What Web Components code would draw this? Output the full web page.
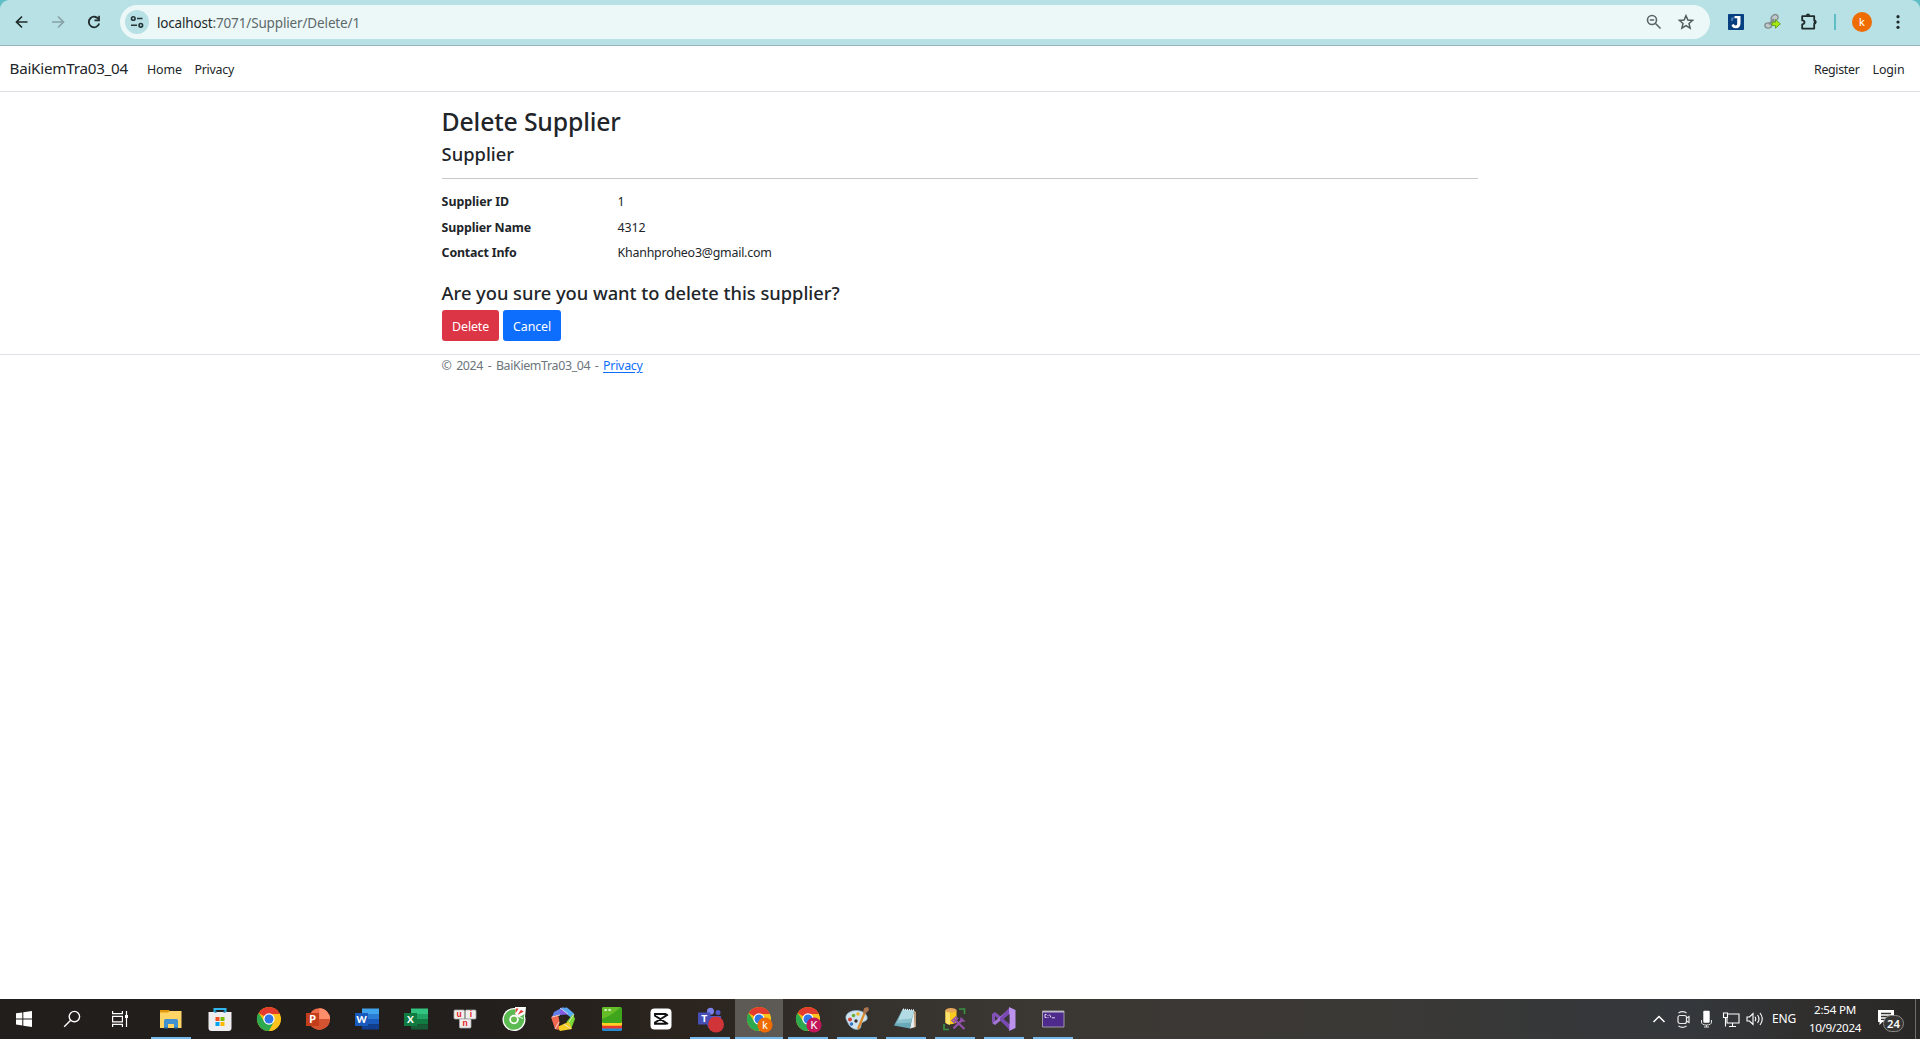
<!DOCTYPE html>
<html lang="en">
<head>
<meta charset="utf-8">
<title>Delete Supplier - BaiKiemTra03_04</title>
<style>
html,body{margin:0;height:100%;overflow:hidden;background:#fff}
body{font-family:"Noto Sans","Open Sans",sans-serif;color:#212529;font-size:12.4px}
</style>
</head>
<body>
<app-window></app-window>
<script>
const define=(name,html,setup)=>customElements.define(name,class extends HTMLElement{
  constructor(){super();this.attachShadow({mode:'open'});}
  connectedCallback(){
    this.shadowRoot.innerHTML=typeof html==='function'?html(this):html;
    if(setup)setup(this);
  }
});
// Text run that spreads its letters over a given advance width.
define('fit-text','<style>:host{display:inline-block;white-space:pre;overflow:visible}:host([underline]) span{text-decoration:underline;text-underline-offset:2px}span{display:inline-block;white-space:pre}</style><span><slot></slot></span>',el=>{
  const w=parseFloat(el.getAttribute('w')),s=el.shadowRoot.querySelector('span');
  const fit=()=>{const n=el.textContent.length;s.style.letterSpacing='0px';
    const nat=s.getBoundingClientRect().width;
    s.style.letterSpacing=((w-nat)/n)+'px';el.style.width=w+'px';};
  requestAnimationFrame(fit);
});

const chrome=(badge,letter)=>`<circle cx="12" cy="12" r="12" fill="#fbbc05"/><path d="M12 12 1.6 6A12 12 0 0 1 22.4 6L23 7H12z" fill="#e33b2e"/><path d="M1.6 6A12 12 0 0 0 12 24l5-9-5-3-5 2z" fill="#2da94f"/><path d="M12 24a12 12 0 0 0 10.6-17H12l5 8z" fill="#fcc31e"/><circle cx="12" cy="12" r="5.7" fill="#fff"/><circle cx="12" cy="12" r="4.5" fill="#2f76e8"/>${badge?`<circle cx="18" cy="18" r="7.6" fill="${badge}"/><text x="18" y="22" font-family="Roboto" font-size="11" fill="#fff" text-anchor="middle">${letter}</text>`:''}`;
const office=(l,a,b,c,d,t)=>`<path d="M7 1.5h17v5.5H7z" fill="${a}"/><path d="M7 7h17v5H7z" fill="${b}"/><path d="M7 12h17v5.500H7z" fill="${c}"/><path d="M7 17.500h17v5H7z" fill="${d}"/><path d="M0 6h13v13H0z" fill="${t}"/><text x="6.500" y="16.200" text-anchor="middle" font-family="Lato" font-weight="900" font-size="10" fill="#fff">${l}</text>`;
const ICONS={
 back:'<path d="M17.500 12H7M12 6.500 6.500 12 12 17.500" fill="none" stroke="#1f2a2b" stroke-width="1.700"/>',
 forward:'<path d="M6 12h10.500M12 6.500 17.500 12 12 17.500" fill="none" stroke="#86a2a6" stroke-width="1.700"/>',
 reload:'<path d="M16.700 9.300A5.300 5.300 0 1 0 17.200 13.600" fill="none" stroke="#1f2a2b" stroke-width="1.800"/><path d="M17.900 5.800v5.400h-5.400v-1.600h3.800V5.800z" fill="#1f2a2b"/>',
 site:'<g fill="none" stroke="#263638" stroke-width="1.600"><circle cx="8.300" cy="8.500" r="1.800"/><path d="M12 8.500h5.500M6 15.300h6"/><circle cx="15.800" cy="15.300" r="1.800"/></g>',
 zoom:'<g fill="none" stroke="#596567" stroke-width="1.600"><circle cx="10" cy="10" r="4.500"/><path d="m13.300 13.300 5.200 5.200M7.800 10h4.400"/></g>',
 star:'<path d="m12 5.700 1.900 4.300 4.700.400-3.600 3.100 1.100 4.600-4.100-2.500-4.100 2.500L9 13.500l-3.600-3.100 4.700-.4z" fill="none" stroke="#4f5c5e" stroke-width="1.500"/>',
 jext:'<rect x="4" y="4" width="16" height="16" rx=".8" fill="#064081"/><path d="M10.500 6h6v7.200q0 5-4.700 5-3.500 0-4.300-3.200l2.500-1q.3 1.500 1.700 1.500 1.500 0 1.500-2V8.300h-2.700z" fill="#fff"/><path d="M7.500 8.200h2M7 10h2" stroke="#8fb5d8"/>',
 chain:'<g fill="#c3cacb" stroke="#858f91" stroke-width="1.400"><ellipse cx="14.500" cy="8" rx="3.800" ry="2.900" transform="rotate(-40 14.500 8)"/><ellipse cx="8.200" cy="15.500" rx="3.300" ry="2.600"/></g><path d="m9 14.500 5-5.500" stroke="#858f91" stroke-width="2.200"/><path d="M12 12.200h3.500V9.500l4.800 4.400-4.800 4.300v-2.600H12z" fill="#a8e810" stroke="#5c9d15" stroke-width=".9"/>',
 puzzle:'<path d="M6.200 6.200h12v4.200h.6v3h-.6v5.200h-12v-4.300q2.300-.3 2.300-2T6.200 10.400z" fill="none" stroke="#1f2a2b" stroke-width="1.800" stroke-linejoin="round"/><path d="M9.900 5.800q0-2.300 2.100-2.300t2.100 2.300zM18.700 10q2 0 2 2.100t-2 2.100z" fill="#1f2a2b"/>',
 dots:'<g fill="#1f2a2b"><circle cx="12" cy="6.700" r="1.600"/><circle cx="12" cy="12" r="1.600"/><circle cx="12" cy="17.300" r="1.600"/></g>',
 win:'<path fill="#fff" d="m4 6.300 6.300-.9v6H4zM11.300 5.200 20 4v7.400h-8.700zM4 12.400h6.300v6.100L4 17.600zM11.300 12.400H20V20l-8.700-1.300z"/>',
 search:'<g fill="none" stroke="#fff" stroke-width="1.400"><circle cx="14.400" cy="9.600" r="5.200"/><path d="M10.700 13.300 4.200 19.800"/></g>',
 task:'<g fill="none" stroke="#fff" stroke-width="1.200"><path d="M4.600 4v2.700h9.800V4M4.600 20v-2.700h9.800V20M4.600 9.300h9.800v5.500H4.600zM18.500 4v16"/></g><path d="M17 8h3v3h-3z" fill="#fff"/>',
 folder:'<path d="M1 3h9l1.500 2H22v4H1z" fill="#e29a0c"/><path d="M1 5.500h8L11 4h11.500v17H1z" fill="#ffd665"/><path d="M5 13.500q0-1.500 1.500-1.500h11q1.500 0 1.500 1.500V21h-4v-4H9v4H5z" fill="#3f91d0"/><path d="M5 20h4v1.500H5zm10 0h4v1.500h-4z" fill="#2578b7"/>',
 store:'<path d="M6.500 6V2h11v4" fill="none" stroke="#31b7ed" stroke-width="2"/><path d="M.500 5h23v16q0 3-3 3h-17q-3 0-3-3z" fill="#eeeef0"/><path d="M6.500 4.700h2M15.500 4.700h2" stroke="#1380b5" stroke-width="2"/><path d="M7.500 10h4v4h-4z" fill="#f25022"/><path d="M12.500 10h4v4h-4z" fill="#7fba00"/><path d="M7.500 15h4v4h-4z" fill="#00a4ef"/><path d="M12.500 15h4v4h-4z" fill="#ffb900"/>',
 chrome:chrome(),
 ppt:'<circle cx="13.300" cy="12" r="10.700" fill="#ed6c47"/><path d="M13.300 1.300A10.700 10.700 0 0 1 24 12H13.300z" fill="#ff8f6b"/><path d="M2.600 12H24a10.700 10.700 0 0 1-21.400 0" fill="#d35230"/><path d="M0 6h13v13H0z" fill="#c43e1c"/><text x="6.500" y="16.200" text-anchor="middle" font-family="Lato" font-weight="900" font-size="10.500" fill="#fff">P</text>',
 word:office('W','#41a5ee','#2b7cd3','#185abd','#103f91','#185abd'),
 excel:office('X','#33c481','#21a366','#107c41','#185c37','#107c41'),
 uni:'<g fill="#f1efee" stroke="#aaa" stroke-width=".8"><rect x="1" y="3" width="10.500" height="9" rx="1"/><rect x="12.500" y="3" width="10.500" height="9" rx="1"/><rect x="6.500" y="12" width="11.500" height="9" rx="1"/></g><g font-family="Liberation Sans" font-size="8.500" font-weight="700" fill="#e82121" text-anchor="middle"><text x="6" y="9.500">u</text><text x="18" y="9.500">i</text><text x="12" y="18.500">n</text></g>',
 coccoc:'<circle cx="12" cy="12.500" r="11.500" fill="#fff"/><path d="M13 0h11l-1 10H13z" fill="#f9fff2"/><circle cx="12" cy="12.500" r="7.300" fill="none" stroke="#5bbb51" stroke-width="6"/><path d="M13 7 14 1h9l-2 11-5-2z" fill="#fff"/><circle cx="12" cy="12.500" r="4.700" fill="#fff"/><circle cx="12" cy="12.500" r="3" fill="#64bd4d"/><path d="m13.500 6.500.4-5h2.600z" fill="#e33a2f"/><path d="m15.500 8 3.500-5.300 2.700 1.700z" fill="#e33a2f"/><path d="m17.500 10 5-3-1 4z" fill="#5bbb51"/>',
 penta:'<path d="M12 0 3 5 1 10l8-2 7-1z" fill="#607de8"/><path d="m10 1 6-.5 7 6-2 5-5-4z" fill="#58a8f4"/><path d="m10 1 7 6.500H9z" fill="#8557df"/><path d="m22 7 2 5-3.500 9-3-.500-2-5.500z" fill="#7bd735"/><path d="m18 15 3 7-12 2-3-4 9-4z" fill="#f3cd25"/><path d="m0 10 7-2 1.500 6-1 9-3.500-1z" fill="#f06850"/><path d="m12 8.500 4 3-1.500 4.500h-5L8 11.500z" fill="#29221f"/><path d="m9 1 8 6M23 7l-5 8M20 22l-7-5M4 22l4-7M1 10l8-2" stroke="#eee" stroke-width=".8"/>',
 blocks:'<rect x="2" y="14" width="20" height="10" rx="1.500" fill="#238bd1"/><rect x="2" y="12" width="20" height="9.500" rx="1.500" fill="#e9382d"/><rect x="2" y="10" width="20" height="8.800" rx="1.500" fill="#ffcf24"/><rect x="2" y="0" width="20" height="16" rx="1.500" fill="#3fa51d"/><path d="M2 1.500Q2 0 3.500 0h17Q13 8 2 12z" fill="#65bd28"/><path d="M4.500 3h2.300M8.500 3h2.300" stroke="#dcf7c5" stroke-width="2"/>',
 capcut:'<rect x="1.500" y="1.500" width="21" height="21" rx="4" fill="#fff"/><path d="M19 7.500 6 15.500v1.300h10.500V15M19 17 6 8.700V7h10.500v2" fill="none" stroke="#111" stroke-width="1.900"/>',
 teams:'<circle cx="12.500" cy="4.300" r="3.500" fill="#7b83eb"/><circle cx="20" cy="5.500" r="2.500" fill="#5059c9"/><path d="M8 9h15v7q0 7-7 7-6 0-7-6z" fill="#5059c9"/><path d="M0 5.500h12.500v12H0z" fill="#464eb8"/><text x="6.200" y="15" text-anchor="middle" font-family="Lato" font-weight="900" font-size="10" fill="#fff">T</text><circle cx="18" cy="17.500" r="8" fill="#d13438"/>',
 chromek:chrome('#ef6c00','k'), chromeK:chrome('#c2185b','K'),
 paint:'<path d="M2 14C-2 8 5 3 12 3.500q8 .500 10 6 1 4-3 5-3 1-3 4 0 4-4.500 4Q5 22 2 14z" fill="#cfe4f0" stroke="#8bb0c5" stroke-width=".7"/><circle cx="5" cy="12.500" r="2" fill="#d84436"/><circle cx="8.500" cy="8.500" r="1.800" fill="#6dae3a"/><circle cx="13" cy="7" r="1.800" fill="#ecb72d"/><circle cx="6.500" cy="17" r="1.800" fill="#3275c4"/><circle cx="11" cy="14" r="1.700" fill="#35302d"/><path d="M20 5 13 22" stroke="#df8c2e" stroke-width="2.300"/><path d="m18 6 1-5 4-1 1 3-4 4z" fill="#a87550"/>',
 note:'<path d="m19.500 3 2.500 2v15l-5.500 1.500z" fill="#b99a78"/><path d="m19.500 3 1 17-4.500 1.500z" fill="#e8eef0"/><path d="M8.500 2.500 20 3.500l-4 18L0 18.500z" fill="#69a9b8"/><path d="M8.500 2.500 20 3.500l-2 8-14 2z" fill="#b3dbe3"/><path d="m4 13 14-1.500-1 4-15 1z" fill="#8cc3cf"/><path d="M9 2.200 20 3.200" stroke="#eef7fa" stroke-width="1.500" stroke-dasharray="1 1"/>',
 ssms:'<path d="M2.500 3.500v12q5 3.500 11 0v-12z" fill="#fcca1d"/><path d="M2.500 4v12q2 1.500 4.500 2V5z" fill="#ffe36a"/><ellipse cx="8" cy="3.300" rx="5.500" ry="2.300" fill="#e7a957"/><path d="M16 2h5.500v5M1 17v5.500h5" fill="none" stroke="#38913f" stroke-width="1.700"/><path d="m11 12 10.500 10M20 12 10.500 21.500" stroke="#9351ac" stroke-width="2.300"/><path d="M9 13.500 13 10l1.500 1.500-3.500 4zM18 10.500v3.500h4" fill="none" stroke="#9351ac" stroke-width="1.500"/>',
 vs:'<path d="m0 7 3-2 15 12v5L3 9v7l-3-1z" fill="#8052b6"/><path d="m0 16 3 2L18 6V1L3 14z" fill="#a174d5"/><path d="m17 0 6.500 3v18L17 24z" fill="#bd91ee"/><path d="m17 1 .5 22L8 13v-2z" fill="#7a49b3"/><path d="M17.500 7v10l-6-5z" fill="#393633"/>',
 cmd:'<path d="M1.500 4h21.500v16H1.500z" fill="#4d2a8b" stroke="#9d98a6" stroke-width="1"/><path d="M1.500 4h21.500v1.500H1.500z" fill="#c0bdc6"/><path d="M5.500 7.500H4v3h1.500M7 8v.800M7 10v.800m1.500-3.300 1.500 3m1 .300h3" fill="none" stroke="#eee" stroke-width=".9"/>',
 chev:'<path d="m6.500 15 5.500-5.500 5.500 5.500" fill="none" stroke="#fff" stroke-width="1.500"/>',
 meet:'<g fill="none" stroke="#e9e9e9" stroke-width="1.200"><rect x="7" y="8.500" width="8.500" height="8" rx="2"/><path d="m15.500 11 2.500-1.500v6L15.500 14M7.500 6q4-2.700 8 0M7.500 19q4 2.700 8 0"/></g>',
 mic:'<rect x="8.300" y="3.700" width="6.400" height="12" rx="1" fill="#fff"/><path d="M6.500 13v2q0 3 5 3t5-3v-2M11.500 18v2m-2.500 0h5" fill="none" stroke="#ddd" stroke-width="1"/>',
 net:'<path d="M9 7h11v9H8V10M13.500 16v3M10 19.500h7M4.500 6h4v4.500h-4zM6.500 10.500v9" fill="none" stroke="#fff" stroke-width="1.100"/>',
 sound:'<g fill="none" stroke="#fff" stroke-width="1.100"><path d="M4 10h2.500L10 6.500v11L6.500 14H4z"/><path d="M12 9.800q1.500 2.200 0 4.400M14.500 8q3 4 0 8M17 6q4.500 6 0 12"/></g>',
 notif:'<path d="M0 3h16v12H4.500L1.500 18v-3H0z" fill="#fff"/><path d="M3 6.500h10M3 9.500h10M3 12.300h6" stroke="#36342f" stroke-width="1.300"/>'
};
define('ui-icon',el=>{const s=el.getAttribute('size')||24;return `<style>:host{display:block;flex:none}svg{display:block;overflow:visible}</style><svg width="${s}" height="${s}" viewBox="0 0 24 24">${ICONS[el.getAttribute('name')]}</svg>`});

define('browser-bar',`<style>
:host{display:block;background:#5fbec5}
.bar{height:45px;box-sizing:content-box;border-bottom:1px solid #93b5b9;background:#b8e1e5;border-radius:9px 9px 0 0;display:flex;align-items:center;padding:0 10px 0 10px}
.bar>*{margin-top:-1px}
.nav{display:flex;gap:12px;width:110px;flex:none}
.omni{width:1590px;height:34px;border-radius:17px;background:#ecf8f8;display:flex;align-items:center;flex:none}
.chip{width:24px;height:24px;border-radius:50%;background:#b8e1e5;margin-left:5px}
.url{margin-left:8px;font-size:13.500px;color:#5d686a;flex:1;line-height:20px;display:flex;padding-top:1px}
.url b{font-weight:400;color:#1f2a2b}
.act{display:flex;gap:8px;margin-right:12px}
.ext{display:flex;gap:12px;margin-left:14px;align-items:center}
.sep{width:2px;height:16px;background:#5fbec5;margin-left:14px;flex:none}
.av{width:20px;height:20px;border-radius:50%;background:#ef6c00;color:#fff;font:11.500px/20px Roboto,sans-serif;text-align:center;margin-left:16px;flex:none}
.dots{margin-left:14px}
</style><div class="bar"><div class="nav"><ui-icon name="back"></ui-icon><ui-icon name="forward"></ui-icon><ui-icon name="reload"></ui-icon></div>
<div class="omni"><div class="chip"><ui-icon name="site"></ui-icon></div><div class="url"><b><fit-text w="55.500">localhost</fit-text></b><fit-text w="147.500">:7071/Supplier/Delete/1</fit-text></div><div class="act"><ui-icon name="zoom"></ui-icon><ui-icon name="star"></ui-icon></div></div>
<div class="ext"><ui-icon name="jext"></ui-icon><ui-icon name="chain"></ui-icon><ui-icon name="puzzle"></ui-icon></div><div class="sep"></div><div class="av">k</div><ui-icon class="dots" name="dots"></ui-icon></div>`);

define('site-nav',`<style>
:host{display:flex;height:45px;border-bottom:1px solid #dee2e6;align-items:center;padding:0 15.500px 0 9.500px;line-height:20px}
.brand{font-size:15.200px;width:137.500px;margin-top:-2px}
.l{display:flex;gap:12.500px;flex:1;padding-top:2px}.r{display:flex;gap:13px;padding-top:2px}
</style><div class="brand"><fit-text w="118.500">BaiKiemTra03_04</fit-text></div><div class="l"><fit-text w="35">Home</fit-text><fit-text w="39.500">Privacy</fit-text></div><div class="r"><fit-text w="45.500">Register</fit-text><fit-text w="32">Login</fit-text></div>`);

define('detail-row',`<style>:host{display:grid;grid-template-columns:176px 1fr;height:25.600px;line-height:19px}
.t{font-weight:700}</style><div class="t"><slot name="term"></slot></div><div><slot></slot></div>`);
define('action-button',`<style>:host{display:flex;height:31px;border-radius:3px;color:#fff;align-items:center;justify-content:center;background:var(--bg);line-height:19px;padding:2px 0 0 1px;box-sizing:border-box}</style><slot></slot>`);

define('supplier-page',`<style>
:host{display:block;flex:1}
main{width:1036.800px;margin:0 auto;padding-top:14px;height:248px}
h1,h4,h3{margin:0;font-weight:500;white-space:nowrap}
h1{font-size:24.800px;line-height:31px;height:36px}
h4,h3{font-size:18.300px;line-height:24px}
hr{margin:12px 0 13px;border:0;height:1px;background:#c8c9ca}
h3{margin-top:12px}
.btns{display:flex;gap:4px;margin-top:5px}
footer{border-top:1px solid #dee2e6;color:#6c757d}
.f{width:1036.800px;margin:0 auto;line-height:20px;padding-top:1px}
.copy{word-spacing:1.700px}
a{color:#0d6efd}
</style><main><h1><fit-text w="179">Delete Supplier</fit-text></h1><h4><fit-text w="72.500">Supplier</fit-text></h4><hr>
<detail-row><fit-text slot="term" w="67.500">Supplier ID</fit-text><fit-text w="7">1</fit-text></detail-row>
<detail-row><fit-text slot="term" w="89.500">Supplier Name</fit-text><fit-text w="28">4312</fit-text></detail-row>
<detail-row><fit-text slot="term" w="75">Contact Info</fit-text><fit-text w="154">Khanhproheo3@gmail.com</fit-text></detail-row>
<h3><fit-text w="398">Are you sure you want to delete this supplier?</fit-text></h3>
<div class="btns"><action-button style="--bg:#dc3545;width:57px"><fit-text w="37">Delete</fit-text></action-button><action-button style="--bg:#0d6efd;width:58px"><fit-text w="38">Cancel</fit-text></action-button></div></main>
<footer><div class="f"><fit-text class="copy" w="161.500">© 2024 - BaiKiemTra03_04 - </fit-text><a><fit-text underline w="39.500">Privacy</fit-text></a></div></footer>`);

define('task-item',el=>`<style>:host{width:48px;height:40px;display:flex;align-items:center;justify-content:center;flex:none;box-sizing:border-box}
:host([active]){background:#5d5a56}
div{height:40px;width:40px;display:flex;align-items:center;justify-content:center;box-sizing:border-box}
:host([open]) div{border-bottom:2px solid #76b9ed;padding-top:2px}:host([active]) div{width:48px}</style><div><ui-icon name="${el.getAttribute('icon')}"></ui-icon></div>`);
const apps=['folder*','store','chrome','ppt','word','excel','uni','coccoc','penta','blocks','capcut','teams*','chromek!','chromeK*','paint*','note*','ssms*','vs*','cmd*'];
define('task-bar',`<style>
:host{display:flex;height:40px;background:linear-gradient(90deg,#211e1b 0,#231f1c 25%,#2b241f 36%,#35312d 45%,#3b3834 54%,#3b3935 70%,#35373a 84%,#34383c 88%,#302f2e 94%,#282725 100%);color:#fff;align-items:center}
.sys{display:flex;width:147px}.apps{display:flex;gap:1px;flex:1}
.tray{display:flex;align-items:center}
.lang{margin-left:5px;font-size:12px;line-height:20px}
.clock{width:52px;margin:0 0 0 13px;display:flex;flex-direction:column;align-items:center;font-size:11.600px;line-height:18px}
.n{margin-left:17px;width:24px;height:24px;position:relative}
.b{position:absolute;left:5px;top:8px;width:21px;height:17px;box-sizing:border-box;border:1px solid #8c8b89;border-radius:9px;background:#373634;font-size:11.300px;font-weight:600;line-height:15px;text-align:center}
.end{width:4px;height:40px;border-left:1px solid #6e6d6b;margin-left:13px}
</style><div class="sys"><task-item icon="win"></task-item><task-item icon="search"></task-item><task-item icon="task"></task-item></div>
<div class="apps">${apps.map(a=>`<task-item icon="${a.replace(/[*!]/,'')}" ${/[*!]/.test(a)?'open':''} ${/!/.test(a)?'active':''}></task-item>`).join('')}</div>
<div class="tray"><ui-icon name="chev"></ui-icon><ui-icon name="meet"></ui-icon><ui-icon name="mic"></ui-icon><ui-icon name="net"></ui-icon><ui-icon name="sound"></ui-icon><div class="lang"><fit-text w="24">ENG</fit-text></div>
<div class="clock"><fit-text w="42">2:54 PM</fit-text><fit-text w="52">10/9/2024</fit-text></div><div class="n"><ui-icon name="notif"></ui-icon><div class="b">24</div></div><div class="end"></div></div>`);
define('app-window',`<style>:host{display:flex;flex-direction:column;width:1920px;height:1039px}</style><browser-bar></browser-bar><site-nav></site-nav><supplier-page></supplier-page><task-bar></task-bar>`);
</script>
</body>
</html>
